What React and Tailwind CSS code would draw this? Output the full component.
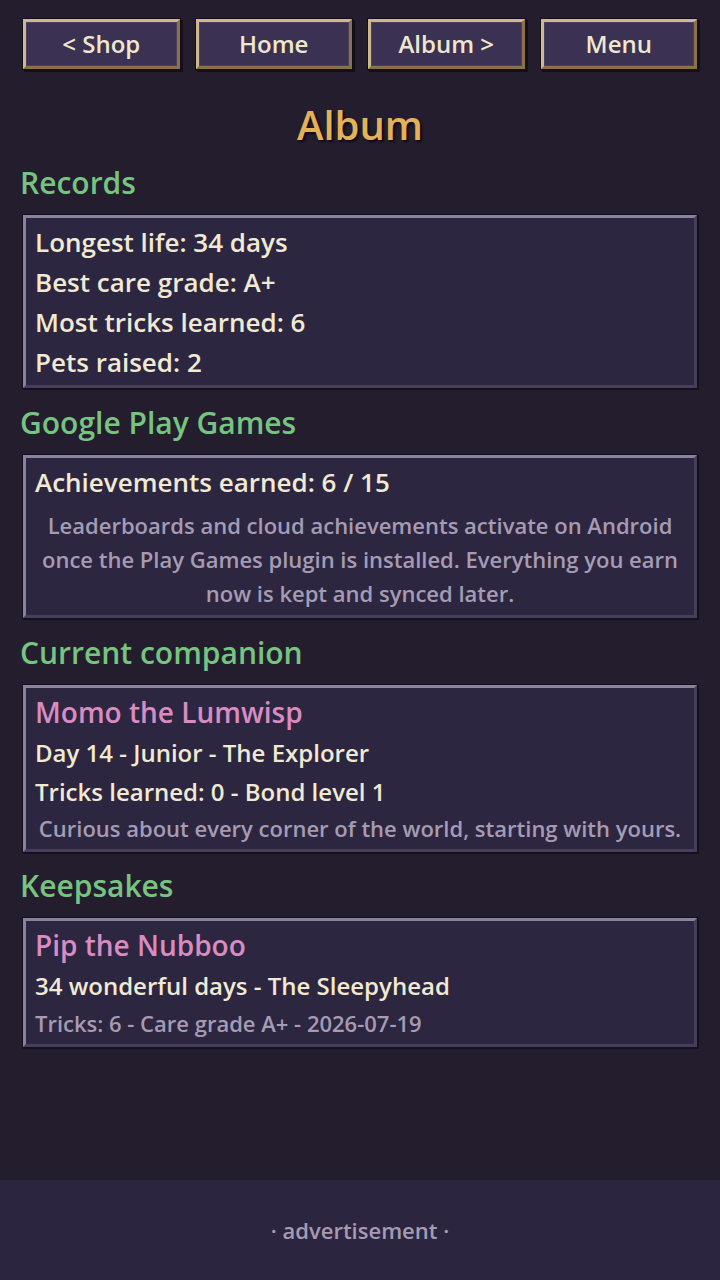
// Album screen: nav buttons, records, play games, companion, keepsakes, ad strip
const NAV = ['< Shop', 'Home', 'Album >', 'Menu'];

const RECORDS = [
  'Longest life: 34 days',
  'Best care grade: A+',
  'Most tricks learned: 6',
  'Pets raised: 2',
];

function Heading({ children, first }) {
  return (
    <h2
      className={`${first ? 'mt-[10px]' : 'mt-[15px]'} mb-[12px] px-[20px] text-[30px] leading-[40px] font-semibold text-[#76c480]`}
    >
      {children}
    </h2>
  );
}

function Panel({ children, className = '' }) {
  return (
    <div className="mx-[23px] shadow-[0_0_0_1px_#15101d,1px_1px_0_1px_#15101d] border-[3px] border-t-[#8b829d] border-l-[#8b829d] border-r-[#463e5a] border-b-[#463e5a] bg-[#2d2640]">
      <div className={`px-[9px] pt-[4px] ${className}`}>{children}</div>
    </div>
  );
}

export default function App() {
  return (
    <div
      className="min-h-screen flex flex-col bg-[#231d2e] text-[#f1ead2]"
      style={{ fontFamily: '"Open Sans", "Noto Sans", sans-serif' }}
    >
      <main className="flex-1 flex flex-col pt-[19px]">
        {/* top nav */}
        <div className="grid grid-cols-4 gap-[16px] px-[23px]">
          {NAV.map((label) => (
            <button
              key={label}
              className="h-[50px] flex items-center justify-center border-[3px] border-t-[#cdb98f] border-l-[#cdb98f] border-r-[#8a7246] border-b-[#8a7246] bg-[#3b3152] shadow-[0_0_0_1px_#140f1a,2px_2px_0_1px_#140f1a] text-[24px] font-semibold text-[#efe7cd]"
            >
              <span className="flex items-center justify-center w-full h-full border border-[#4a4063]">
                {label}
              </span>
            </button>
          ))}
        </div>

        <h1 className="mt-[28px] h-[56px] leading-[56px] text-center text-[40px] font-semibold text-[#e3b257] [text-shadow:2px_2px_2px_#0e0a12]">
          Album
        </h1>

        <Heading first>Records</Heading>
        <Panel className="pb-[3px]">
          {RECORDS.map((r) => (
            <div key={r} className="text-[26px] leading-[40px] font-semibold">
              {r}
            </div>
          ))}
        </Panel>

        <Heading>Google Play Games</Heading>
        <Panel className="pb-[5px]">
          <div className="text-[26px] leading-[40px] font-semibold">Achievements earned: 6 / 15</div>
          <p className="mt-[6px] text-center text-[22px] leading-[34px] font-semibold text-[#a59cb4]">
            Leaderboards and cloud achievements activate on Android once the Play Games plugin is
            installed. Everything you earn now is kept and synced later.
          </p>
        </Panel>

        <Heading>Current companion</Heading>
        <Panel className="pb-[4px]">
          <div className="text-[28px] leading-[40px] font-semibold text-[#d98cc1]">Momo the Lumwisp</div>
          <div className="text-[24px] leading-[41px] font-semibold">Day 14 - Junior - The Explorer</div>
          <div className="text-[24px] leading-[38px] font-semibold">Tricks learned: 0 - Bond level 1</div>
          <div className="text-center text-[22px] leading-[34px] font-semibold text-[#a59cb4] whitespace-nowrap">
            Curious about every corner of the world, starting with yours.
          </div>
        </Panel>

        <div className="-mt-[1px]">
          <Heading>Keepsakes</Heading>
        </div>
        <Panel className="pb-[5px]">
          <div className="text-[28px] leading-[40px] font-semibold text-[#d98cc1]">Pip the Nubboo</div>
          <div className="text-[24px] leading-[42px] font-semibold">34 wonderful days - The Sleepyhead</div>
          <div className="text-[22px] leading-[32px] font-semibold text-[#a59cb4]">
            Tricks: 6 - Care grade A+ - 2026-07-19
          </div>
        </Panel>
      </main>

      {/* ad strip */}
      <footer className="h-[100px] flex items-center justify-center bg-[#2c2540] text-[22px] font-semibold text-[#a59cb4]">
        · advertisement ·
      </footer>
    </div>
  );
}
